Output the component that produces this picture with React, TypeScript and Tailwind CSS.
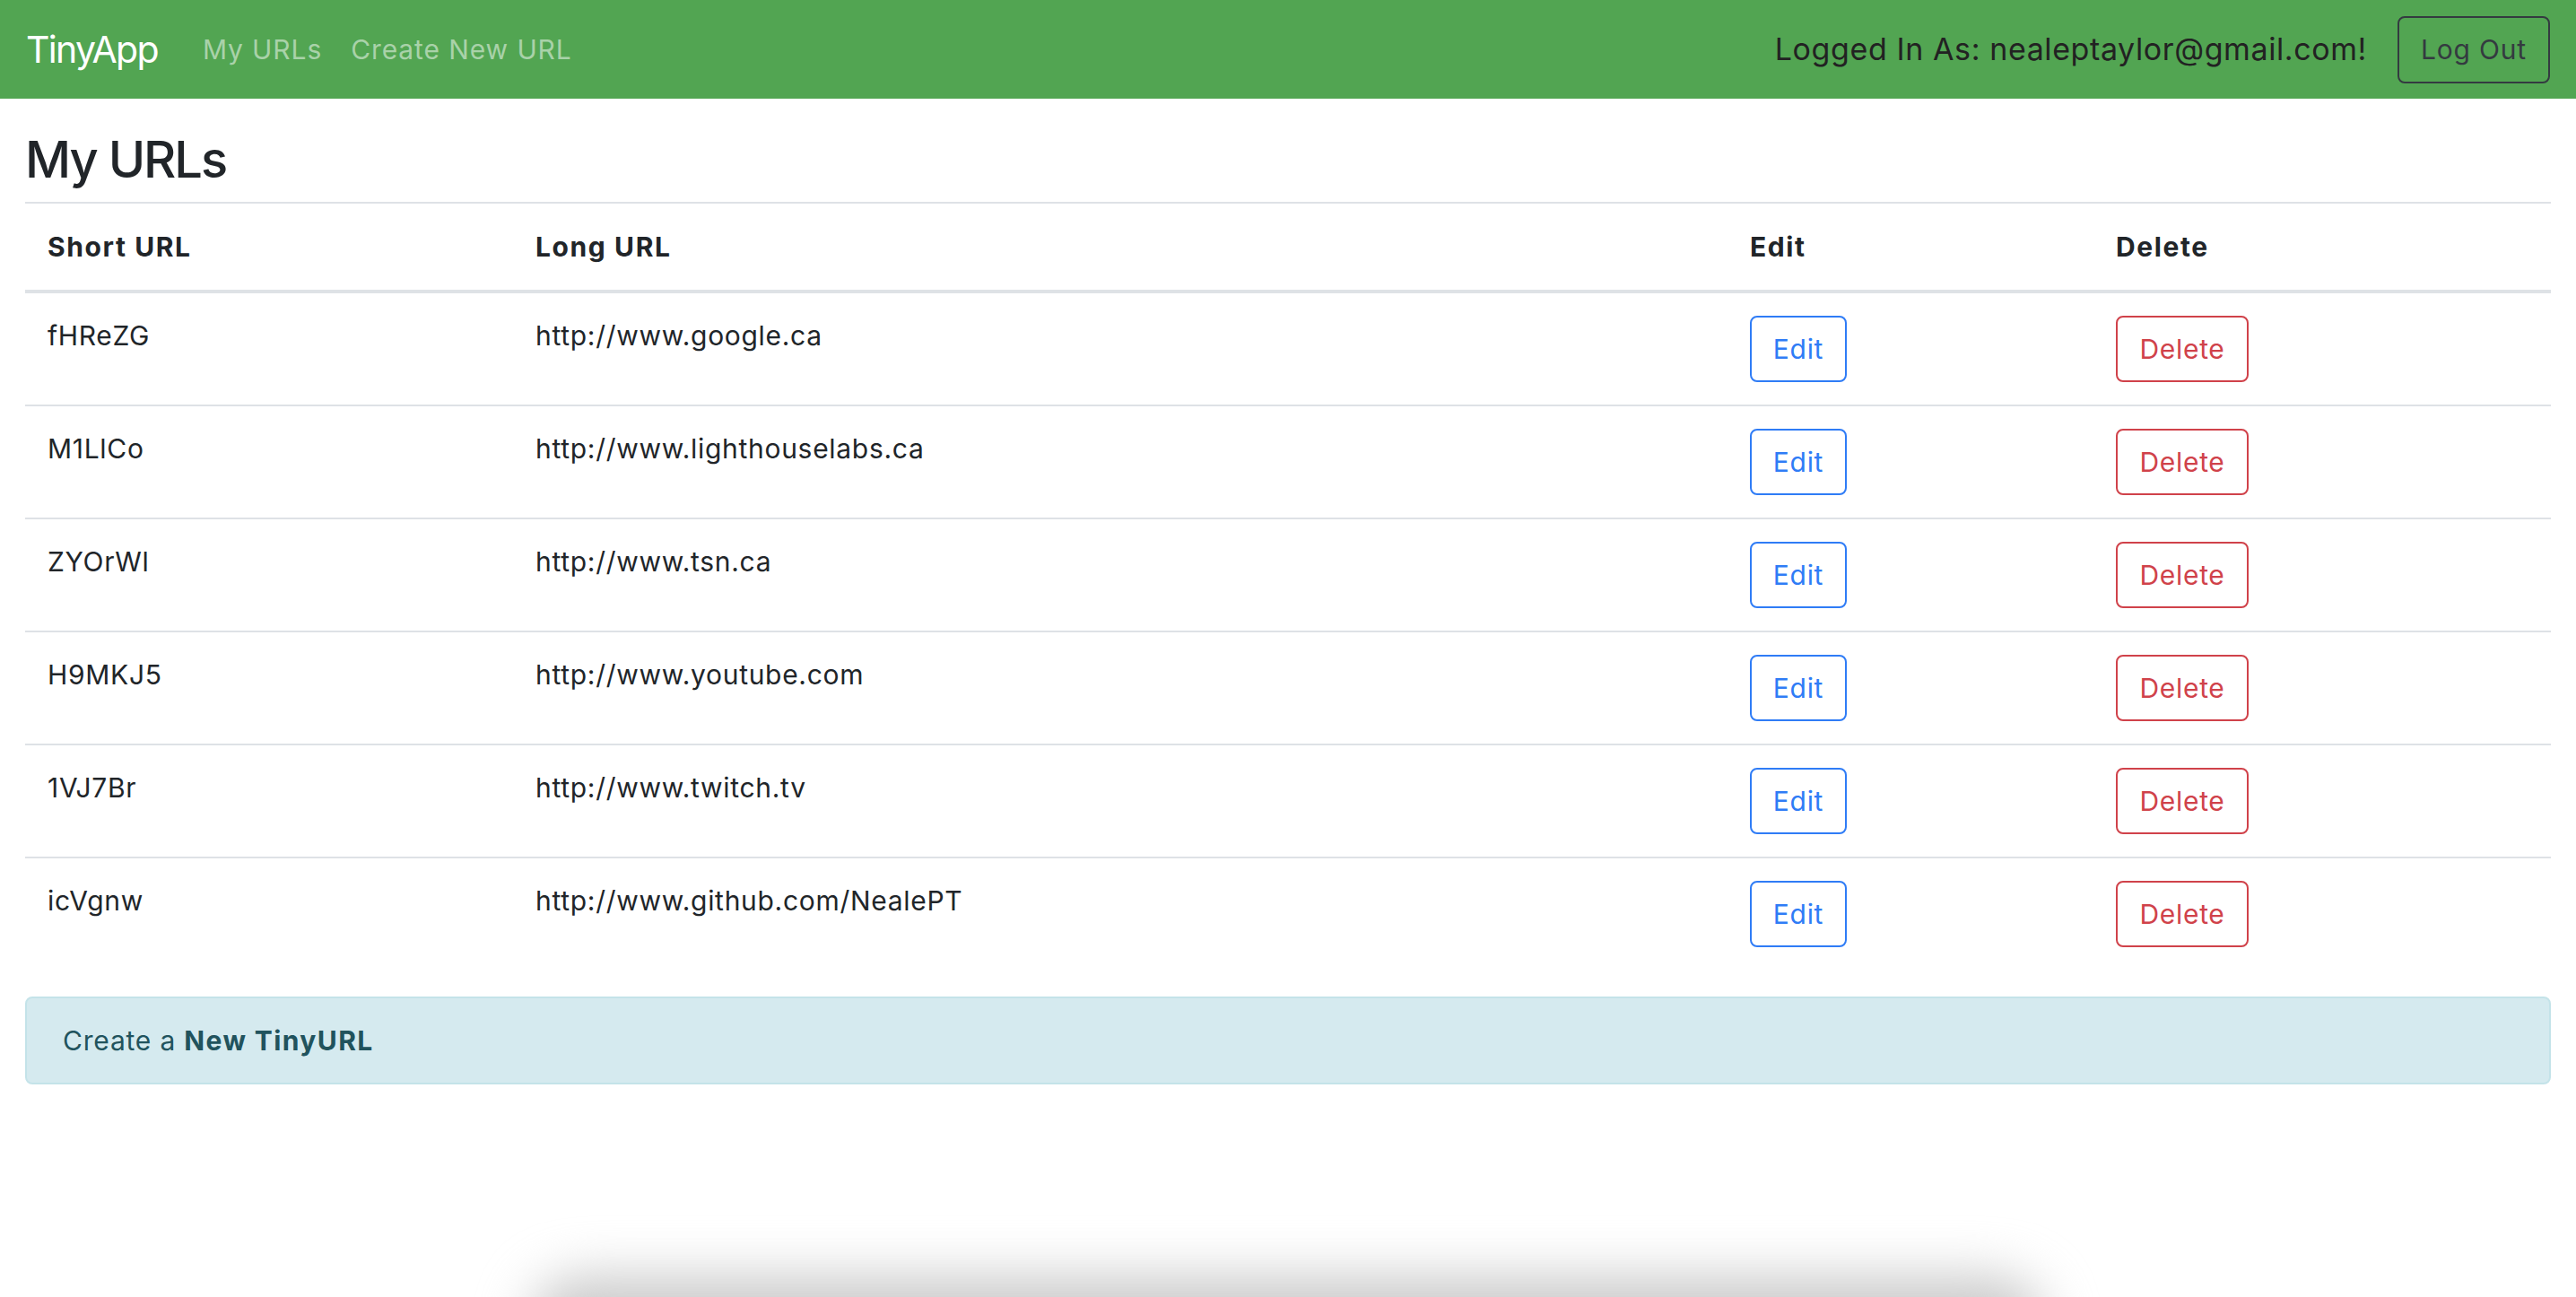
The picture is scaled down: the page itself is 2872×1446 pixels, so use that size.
import React from "react";

const rows = [
  { s: "fHReZG", l: "http://www.google.ca" },
  { s: "M1LlCo", l: "http://www.lighthouselabs.ca" },
  { s: "ZYOrWl", l: "http://www.tsn.ca" },
  { s: "H9MKJ5", l: "http://www.youtube.com" },
  { s: "1VJ7Br", l: "http://www.twitch.tv" },
  { s: "icVgnw", l: "http://www.github.com/NealePT" },
];

export default function App() {
  return (
    <div className="relative h-[1446px] overflow-hidden bg-white font-['Inter','Noto_Sans',sans-serif] text-[#212529]">
      <nav className="flex h-[110px] items-center bg-[#52a552] pl-[29px] pr-[29px]">
        <span className="text-[41px] leading-none tracking-[-1.7px] text-white">TinyApp</span>
        <a className="ml-[50px] text-[30px] leading-none tracking-[0.9px] text-[#a9d2a9]">My URLs</a>
        <a className="ml-[32px] text-[30px] leading-none tracking-[0.9px] text-[#a9d2a9]">Create New URL</a>
        <div className="ml-auto flex items-center">
          <span className="text-[34px] leading-none tracking-[0.6px] text-[#222]">
            Logged In As: nealeptaylor@gmail.com!
          </span>
          <button className="ml-[34px] flex h-[75px] w-[170px] items-center justify-center rounded-[8px] border-2 border-[#343a40] text-[30px] tracking-[0.8px] text-[#343a40]">
            Log Out
          </button>
        </div>
      </nav>
      <main className="px-[28px]">
        <h2 className="mt-[33px] mb-[12px] text-[56px] font-medium leading-[70px] tracking-[-2px]">My URLs</h2>
        <table className="w-full table-fixed border-collapse text-[30px] leading-[44px] tracking-[0.7px]">
          <colgroup>
            <col className="w-[544px]" />
            <col className="w-[1354px]" />
            <col className="w-[408px]" />
            <col />
          </colgroup>
          <thead>
            <tr className="border-t-2 border-b-4 border-[#dee2e6]">
              <th className="px-[25px] py-[26px] text-left font-bold tracking-[1.6px]">Short URL</th>
              <th className="px-[25px] py-[26px] text-left font-bold tracking-[1.6px]">Long URL</th>
              <th className="px-[25px] py-[26px] text-left font-bold tracking-[1.6px]">Edit</th>
              <th className="px-[25px] py-[26px] text-left font-bold tracking-[1.6px]">Delete</th>
            </tr>
          </thead>
          <tbody>
            {rows.map((r, i) => (
              <tr key={r.s} className={i === 0 ? "" : "border-t-2 border-[#dee2e6]"}>
                <td className="px-[25px] pt-[25px] pb-[25px] align-top">{r.s}</td>
                <td className="px-[25px] pt-[25px] pb-[25px] align-top">{r.l}</td>
                <td className="px-[25px] pt-[25px] pb-[25px] align-top">
                  <button className="flex h-[74px] w-[108px] items-center justify-center rounded-[8px] border-2 border-[#2f7cf6] text-[30px] tracking-[0.7px] text-[#2f7cf6]">
                    Edit
                  </button>
                </td>
                <td className="px-[25px] pt-[25px] pb-[25px] align-top">
                  <button className="flex h-[74px] w-[148px] items-center justify-center rounded-[8px] border-2 border-[#d0424a] text-[30px] tracking-[0.7px] text-[#d0424a]">
                    Delete
                  </button>
                </td>
              </tr>
            ))}
          </tbody>
        </table>
        <div className="mt-[30px] rounded-[8px] border-2 border-[#c4e3e9] bg-[#d5eaef] px-[40px] py-[25px] text-[30px] leading-[44px] tracking-[0.8px] text-[#21535d]">
          Create a <span className="font-bold tracking-[1.4px]">New TinyURL</span>
        </div>
      </main>
      <div className="pointer-events-none absolute left-[590px] top-[1422px] h-[120px] w-[1690px] rounded-full bg-[#cbcbcb] blur-[28px]" />
    </div>
  );
}
